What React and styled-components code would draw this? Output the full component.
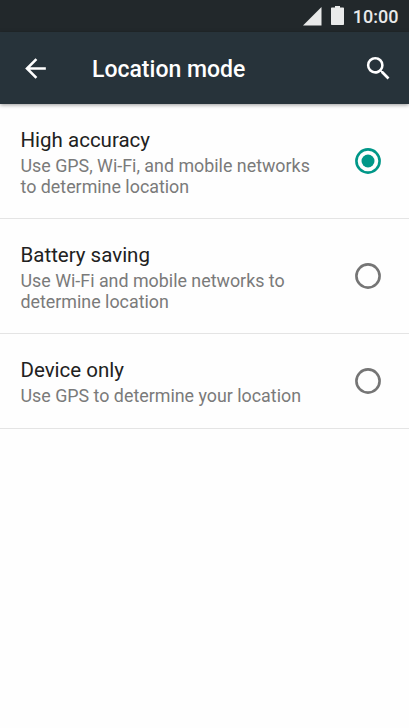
import React from "react";
import styled, { createGlobalStyle } from "styled-components";

const modes = [
  {
    title: "High accuracy",
    summary: ["Use GPS, Wi-Fi, and mobile networks", "to determine location"],
    checked: true,
  },
  {
    title: "Battery saving",
    summary: ["Use Wi-Fi and mobile networks to", "determine location"],
  },
  {
    title: "Device only",
    summary: ["Use GPS to determine your location"],
  },
];

function App() {
  return (
    <Screen>
      <GlobalStyle />
      <StatusBar>
        <Signal viewBox="0 0 19 19">
          <path d="M18.5 0v18.5H0z" />
        </Signal>
        <Battery viewBox="0 0 13 19">
          <path d="M4 0h5v1.5h3.2a.8.8 0 0 1 .8.8v15.9a.8.8 0 0 1-.8.8H.8a.8.8 0 0 1-.8-.8V2.3a.8.8 0 0 1 .8-.8H4z" />
        </Battery>
        <Clock>10:00</Clock>
      </StatusBar>
      <Toolbar>
        <ToolbarIcon viewBox="0 0 24 24">
          <path d="M20 11H7.83l5.59-5.59L12 4l-8 8 8 8 1.41-1.41L7.83 13H20v-2z" />
        </ToolbarIcon>
        <Title>Location mode</Title>
        <ToolbarIcon viewBox="0 0 24 24">
          <path d="M15.5 14h-.79l-.28-.27A6.471 6.471 0 0 0 16 9.5 6.5 6.5 0 1 0 9.5 16c1.61 0 3.09-.59 4.23-1.57l.27.28v.79l5 4.99L20.49 19l-4.99-5zm-6 0C7.01 14 5 11.99 5 9.5S7.01 5 9.5 5 14 7.01 14 9.5 11.99 14 9.5 14z" />
        </ToolbarIcon>
      </Toolbar>
      <List>
        {modes.map((mode) => (
          <Row key={mode.title}>
            <RowText>
              <RowTitle>{mode.title}</RowTitle>
              {mode.summary.map((line) => (
                <Summary key={line}>{line}</Summary>
              ))}
            </RowText>
            <Radio viewBox="0 0 26 26" $checked={mode.checked}>
              <circle cx="13" cy="13" r="11.6" />
              {mode.checked && <Dot cx="13" cy="13" r="6.5" />}
            </Radio>
          </Row>
        ))}
      </List>
    </Screen>
  );
}
export default App;

const GlobalStyle = createGlobalStyle`
  body {
    margin: 0;
    background: #fefefe;
  }
`;
const Screen = styled.div`
  height: 728px;
  overflow: hidden;
  background: #fefefe;
  font-family: Roboto, sans-serif;
`;
const StatusBar = styled.div`
  box-sizing: border-box;
  height: 32px;
  padding-right: 10.5px;
  display: flex;
  justify-content: flex-end;
  align-items: center;
  background: #22282b;
`;
const Signal = styled.svg`
  width: 19px;
  height: 19px;
  margin-right: 9.5px;
  fill: #e9eaea;
`;
const Battery = styled.svg`
  width: 13px;
  height: 19px;
  margin: 0 8.5px 1px 0;
  fill: #e9eaea;
`;
const Clock = styled.span`
  padding-top: 2px;
  font-size: 18px;
  font-weight: 500;
  line-height: 30px;
  color: #e9eaea;
`;
const Toolbar = styled.div`
  box-sizing: border-box;
  position: relative;
  height: 72px;
  padding: 0 15px 0 20px;
  display: flex;
  align-items: center;
  background: #27333a;
  box-shadow: 0 1px 4px rgba(0, 0, 0, 0.4);
`;
const ToolbarIcon = styled.svg`
  width: 31px;
  height: 31px;
  fill: #fff;
`;
const Title = styled.h1`
  flex: 1;
  margin: 0 0 0 41px;
  padding-top: 2px;
  font-size: 23px;
  font-weight: 500;
  color: #fff;
`;
const List = styled.div``;
const Row = styled.div`
  padding: 0 28px 0 20.5px;
  display: flex;
  justify-content: space-between;
  align-items: center;
  border-bottom: 1px solid #e4e4e4;
`;
const RowText = styled.div`
  padding: 24px 0 21px;
`;
const RowTitle = styled.div`
  margin-bottom: 4px;
  font-size: 20.5px;
  line-height: 24px;
  color: #212121;
`;
const Summary = styled.div`
  font-size: 17.85px;
  line-height: 20.5px;
  color: #7a7a7a;
  white-space: nowrap;
`;
const Radio = styled.svg`
  flex: none;
  width: 26px;
  height: 26px;
  fill: none;
  stroke: ${(props) => (props.$checked ? "#009788" : "#757575")};
  stroke-width: 2.6;
`;
const Dot = styled.circle`
  fill: #009788;
  stroke: none;
`;
